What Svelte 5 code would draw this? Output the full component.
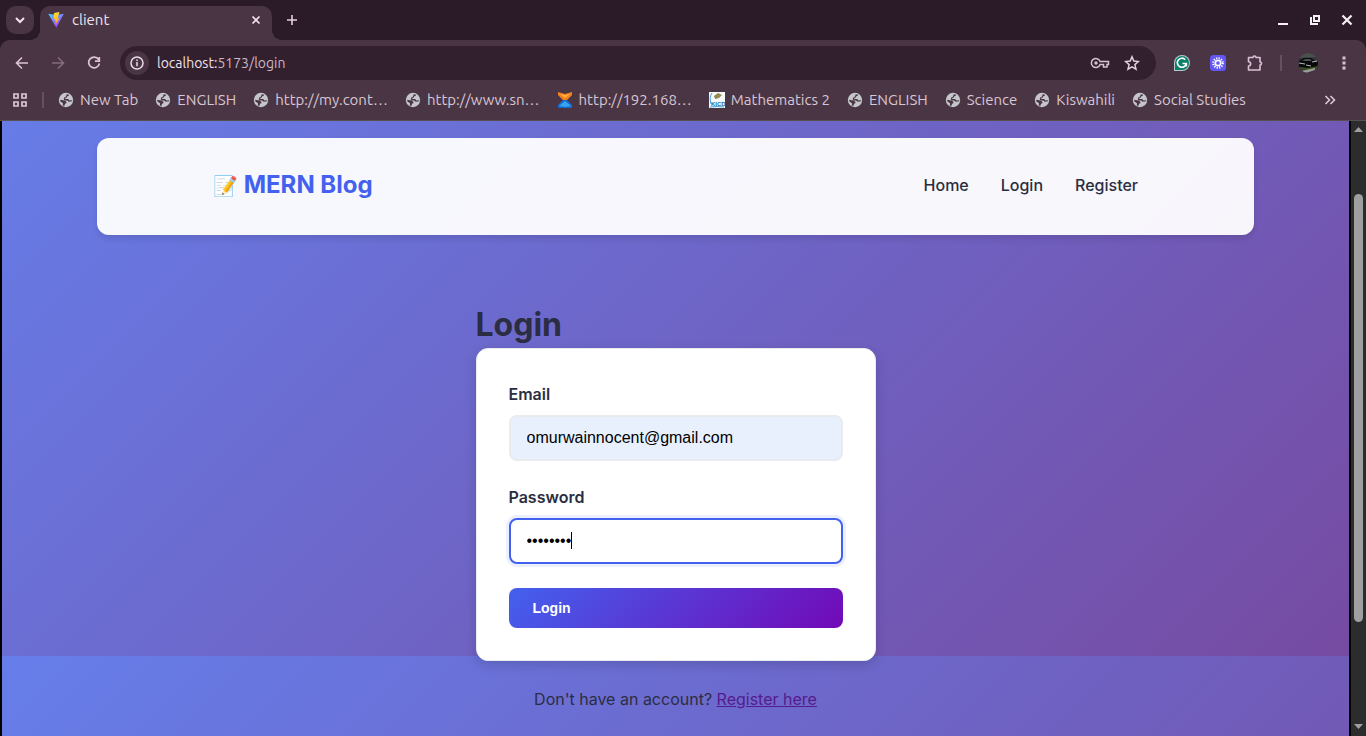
<script>
  const bookmarks = [
    { title: 'New Tab', icon: 'globe' },
    { title: 'ENGLISH', icon: 'globe' },
    { title: 'http://my.cont…', icon: 'globe' },
    { title: 'http://www.sn…', icon: 'globe' },
    { title: 'http://192.168…', icon: 'hourglass' },
    { title: 'Mathematics 2', icon: 'kicd' },
    { title: 'ENGLISH', icon: 'globe' },
    { title: 'Science', icon: 'globe' },
    { title: 'Kiswahili', icon: 'globe' },
    { title: 'Social Studies', icon: 'globe' }
  ];
  const links = ['Home', 'Login', 'Register'];
  let email = $state('omurwainnocent@gmail.com');
  let password = $state('password');
</script>

<div class="browser">
  <header class="tabstrip">
    <button class="tab-search" aria-label="Search tabs">
      <svg width="12" height="12" viewBox="0 0 12 12"><path d="M2 4l4 4 4-4" fill="none" stroke="#f2e4ee" stroke-width="2" /></svg>
    </button>
    <div class="tab">
      <svg width="16" height="16" viewBox="0 0 16 16">
        <defs>
          <linearGradient id="v1" x1="0" y1="0" x2=".6" y2="1"><stop offset="0" stop-color="#41d1ff" /><stop offset="1" stop-color="#bd34fe" /></linearGradient>
          <linearGradient id="v2" x1="0" y1="0" x2="0" y2="1"><stop offset="0" stop-color="#ffdd35" /><stop offset="1" stop-color="#ffa800" /></linearGradient>
        </defs>
        <path d="M.2 1.800L8 3l7.800-1.200L8.300 15.700z" fill="url(#v1)" />
        <path d="M11.500 0L6 1.100 5.600 7.300l1.700-.3-.5 2.500 1.300-.4-.7 3.700 4-6.500-1.900.3z" fill="url(#v2)" />
      </svg>
      <span class="tab-title">client</span>
      <button class="bare" aria-label="Close tab">
        <svg width="16" height="16" viewBox="0 0 16 16"><path d="M4.500 4.500l7 7M11.500 4.500l-7 7" stroke="#f2e4ee" stroke-width="1.700" /></svg>
      </button>
    </div>
    <button class="bare new-tab" aria-label="New tab">
      <svg width="16" height="16" viewBox="0 0 16 16"><path d="M8 3v10M3 8h10" stroke="#e5cfe0" stroke-width="1.600" /></svg>
    </button>
    <div class="window-controls">
      <button class="bare" aria-label="Minimize"><svg width="16" height="16" viewBox="0 0 16 16"><path d="M3 12h10" stroke="#f4f0f3" stroke-width="2" /></svg></button>
      <button class="bare" aria-label="Restore"><svg width="16" height="16" viewBox="0 0 16 16"><path d="M7 4h5v5H7zM4 5v7h7" fill="none" stroke="#f4f0f3" stroke-width="2" /></svg></button>
      <button class="bare" aria-label="Close"><svg width="16" height="16" viewBox="0 0 16 16"><path d="M3.500 3.500l9 9M12.500 3.500l-9 9" stroke="#f4f0f3" stroke-width="2.200" /></svg></button>
    </div>
  </header>

  <div class="toolbar">
    <div class="history">
      <button class="bare" aria-label="Back"><svg width="16" height="16" viewBox="0 0 16 16"><path d="M14 8H3M8 2.500L2.500 8 8 13.500" fill="none" stroke="#dfc4d8" stroke-width="1.600" /></svg></button>
      <button class="bare" aria-label="Forward"><svg width="16" height="16" viewBox="0 0 16 16"><path d="M2 8h11M8 2.500L13.500 8 8 13.500" fill="none" stroke="#856c7d" stroke-width="1.600" /></svg></button>
      <button class="bare" aria-label="Reload"><svg width="16" height="16" viewBox="0 0 16 16"><path d="M12.600 4.500A5.400 5.400 0 1 0 13.400 8.500M13.300 2v4.200H9" fill="none" stroke="#dfc4d8" stroke-width="1.700" /></svg></button>
    </div>
    <div class="omnibox">
      <button class="info" aria-label="View site information">
        <svg width="14" height="14" viewBox="0 0 14 14"><circle cx="7" cy="7" r="6" fill="none" stroke="#eadde6" stroke-width="1.500" /><path d="M7 6v4.200M7 3.500v1.500" stroke="#eadde6" stroke-width="1.500" /></svg>
      </button>
      <span class="url"><b>localhost:</b>5173/login</span>
      <button class="bare" aria-label="Passwords">
        <svg width="20" height="16" viewBox="0 0 20 16"><path d="M10.100 6.500A4.500 4.500 0 1 0 10.100 9.500H13.500V12h3.500V9.500h1.500v-3z" fill="none" stroke="#d8c2d1" stroke-width="1.500" /><circle cx="6" cy="8" r="1.700" fill="#d8c2d1" /></svg>
      </button>
      <button class="bare" aria-label="Bookmark this tab">
        <svg width="16" height="16" viewBox="0 0 16 16"><path d="M8 1.800l1.800 4.300 4.600.4-3.500 3.100 1.100 4.600L8 11.800l-4 2.400 1.100-4.600L1.600 6.500l4.600-.4z" fill="none" stroke="#e5d0df" stroke-width="1.500" /></svg>
      </button>
    </div>
    <div class="side">
      <div class="extensions">
        <button class="bare" aria-label="Grammarly">
          <svg width="16" height="16" viewBox="0 0 16 16"><path d="M0 16V8a8 8 0 1 1 8 8z" fill="#b8c9c5" /><path d="M1 15V8a7 7 0 1 1 7 7z" fill="#087f6b" /><path d="M11.200 4.700A4.500 4.500 0 1 0 12.300 8.500H8.500M12.300 8.500v3" fill="none" stroke="#fff" stroke-width="1.700" /></svg>
        </button>
        <button class="bare" aria-label="Assistant">
          <svg width="16" height="16" viewBox="0 0 16 16"><rect width="16" height="16" rx="3.500" fill="#6357f4" /><circle cx="8" cy="8" r="2.600" fill="none" stroke="#fff" stroke-width="1.500" /><circle cx="8" cy="8" r="4.600" fill="none" stroke="#fff" stroke-width="2.400" stroke-dasharray="1.200 1.209" /></svg>
        </button>
        <button class="bare" aria-label="Extensions">
          <svg width="18" height="18" viewBox="0 0 18 18"><path d="M2.500 3.500H7a1.500 1.500 0 0 1 3 0h4V8a1.500 1.500 0 0 1 0 3v5H2.500v-4a2 2 0 0 0 0-4.300z" fill="none" stroke="#dcc1d5" stroke-width="1.600" stroke-linejoin="round" /></svg>
        </button>
      </div>
      <span class="rule"></span>
      <button class="bare" aria-label="Profile">
        <svg width="20" height="20" viewBox="0 0 20 20">
          <defs><clipPath id="round"><circle cx="10" cy="10" r="10" /></clipPath></defs>
          <g clip-path="url(#round)"><path d="M0 0h20v20H0z" fill="#343638" /><path d="M0 0h20v4l-20 1z" fill="#4b504d" /><path d="M1 8l5-3h7l4 3 3 1v5l-7 2-12-2z" fill="#08090b" /><path d="M7 6h5l2 2H4z" fill="#495154" /><path d="M1 10l6 1M14 9l5-1M8 12l5 1" stroke="#b5baba" /><path d="M0 14l10 1 10-2v2l-10 2-10-2z" fill="#3a551e" /><path d="M3 18l14-3v2L8 20z" fill="#9a9c9c" /></g>
        </svg>
      </button>
      <button class="bare" aria-label="Menu"><svg width="20" height="16" viewBox="-2 0 20 16"><path d="M6.500 1.500h3v3h-3zM6.500 6.500h3v3h-3zM6.500 11.500h3v3h-3z" fill="#dcc1d5" /></svg></button>
    </div>
  </div>

  <nav class="bookmarks" aria-label="Bookmarks">
    <button class="bare" aria-label="Apps">
      <svg width="16" height="16" viewBox="0 0 16 16"><path d="M2 2h4v4H2zM10 2h4v4h-4zM2 10h4v4H2zM10 10h4v4h-4z" fill="none" stroke="#dac9d4" stroke-width="1.700" /></svg>
    </button>
    <span class="rule"></span>
    <div class="marks">
      {#each bookmarks as mark}
        <a href="#bookmark">
          {#if mark.icon === 'globe'}
            <svg width="16" height="16" viewBox="0 0 16 16"><circle cx="8" cy="8" r="7.200" fill="#c5c6cb" /><path d="M8.800 2.200l2.400.5-.8 1.200-1.200.3-.4 1.300-1.600.5.2 1h2.800l1.200 1.500 2.800-.3v1l-3.600.5-1.400-1.300H6.600L5.700 7.200l.6-1.800 1.500-.6zM2.200 7.800l4.200.6 2 1.400v1.400l-1.400.6-.6 2.200-1.600-.6.200-2.200L2.400 9.600z" fill="#4a3545" /></svg>
          {:else if mark.icon === 'hourglass'}
            <svg width="16" height="16" viewBox="0 0 16 16"><path d="M1 0l7 2 7-2v3L10 8H6L1 3z" fill="#f58220" /><path d="M6 8h4l5 5v3H1v-3z" fill="#1769d2" /><path d="M2 14l6-5 6 5-6 1z" fill="#35a4ef" /><path d="M3 2l5 1 5-1-5 4z" fill="#ffad3b" /></svg>
          {:else}
            <svg width="16" height="16" viewBox="0 0 16 16"><path d="M0 0h16v16H0z" fill="#f7f8f8" /><path d="M3 1Q0 5 2 12" fill="none" stroke="#49a0d8" /><path d="M5 4l4-3 4 2-3 3-4 1z" fill="#938951" /><text x="2" y="14" font-family="Liberation Sans" font-weight="700" font-size="6" fill="#176eae">KICD</text><path d="M1 15Q8 14 15 15" fill="none" stroke="#47a3dc" /></svg>
          {/if}
          <span>{mark.title}</span>
        </a>
      {/each}
    </div>
    <button class="bare" aria-label="More bookmarks"><svg width="16" height="16" viewBox="0 0 16 16"><path d="M3.500 4l4 4-4 4M8.500 4l4 4-4 4" fill="none" stroke="#dac9d4" stroke-width="1.600" /></svg></button>
  </nav>

  <div class="viewport">
    <main class="page">
      <nav class="site-nav">
        <a class="brand" href="#home"><span class="emoji">📝</span> MERN Blog</a>
        <div class="links">
          {#each links as link}<a href="#{link.toLowerCase()}">{link}</a>{/each}
        </div>
      </nav>
      <section class="login">
        <h1>Login</h1>
        <form onsubmit={(e) => e.preventDefault()}>
          <div class="fields">
            <div class="field">
              <label for="email">Email</label>
              <input id="email" class="filled" type="email" bind:value={email} />
            </div>
            <div class="field">
              <label for="password">Password</label>
              <div class="entry">
                <input id="password" class="active" type="password" bind:value={password} />
                <span class="caret"></span>
              </div>
            </div>
          </div>
          <button class="submit" type="submit">Login</button>
        </form>
        <p>Don't have an account? <a href="#register">Register here</a></p>
      </section>
    </main>
    <div class="scrollbar" aria-hidden="true">
      <svg width="9" height="5" viewBox="0 0 9 5"><path d="M0 5L4.500 0 9 5z" fill="#9f9f9f" /></svg>
      <div class="track"><span class="thumb"></span></div>
      <svg width="9" height="5" viewBox="0 0 9 5"><path d="M0 0l4.500 5L9 0z" fill="#9f9f9f" /></svg>
    </div>
  </div>
</div>

<style>
  :global(body) { margin: 0; background: #000; }
  * { box-sizing: border-box; }
  svg { display: block; flex: none; }
  .browser { display: flex; flex-direction: column; height: 100vh; overflow: hidden; font: 15px/20px Ubuntu, "Noto Sans", sans-serif; color: #d8c6d2; background: #2b1b28; }
  .bare { display: flex; padding: 0; border: 0; background: none; }
  .tabstrip { display: flex; align-items: center; height: 40px; flex: none; padding-left: 6px; }
  .tab-search { display: grid; place-items: center; width: 28px; height: 28px; padding: 0; border: 0; border-radius: 10px; background: #4a3545; }
  .tab { position: relative; display: flex; align-items: center; align-self: flex-end; gap: 8px; width: 232px; height: 34px; margin-left: 6px; padding: 0 8px 6px; border-radius: 10px 10px 0 0; background: #4a3545; color: #f0e2ec; }
  .tab::before, .tab::after { content: ""; position: absolute; bottom: 0; width: 10px; height: 10px; }
  .tab::before { right: 100%; background: radial-gradient(circle at 0 0, transparent 10px, #4a3545 10px); }
  .tab::after { left: 100%; background: radial-gradient(circle at 100% 0, transparent 10px, #4a3545 10px); }
  .tab-title { flex: 1; }
  .new-tab { margin-left: 12px; }
  .window-controls { display: flex; gap: 16px; margin-left: auto; padding-right: 11px; }
  .toolbar { display: flex; align-items: center; flex: none; height: 40px; padding: 6px 12px 0 14px; background: #4a3545; border-radius: 10px 10px 0 0; }
  .history { display: flex; gap: 20px; margin-right: 18px; }
  .omnibox { display: flex; flex: 1; align-items: center; gap: 14px; height: 34px; padding: 0 16px 0 5px; border-radius: 17px; background: #33202e; }
  .info { display: grid; place-items: center; width: 24px; height: 24px; margin-right: -6px; padding: 0; border: 0; border-radius: 12px; background: #4a3545; }
  .url { flex: 1; font-size: 14px; color: #cbb7c4; }
  .url b { font-weight: 400; color: #f0e2ec; }
  .side { display: flex; align-items: center; gap: 16px; padding-left: 18px; }
  .extensions { display: flex; align-items: center; gap: 20px; }
  .rule { width: 2px; height: 16px; background: #66515f; }
  .bookmarks { display: flex; align-items: center; flex: none; height: 41px; padding: 0 28px 0 12px; background: #4a3545; border-bottom: 1px solid #57504f; }
  .bookmarks .rule { margin: 0 14px; }
  .marks { display: flex; flex: 1; gap: 17px; overflow: hidden; }
  .marks a { display: flex; align-items: center; gap: 6px; color: inherit; text-decoration: none; white-space: nowrap; }
  .viewport { display: flex; flex: 1; min-height: 0; background: #000; padding-left: 2px; gap: 2px; }
  .page { flex: 1; overflow: hidden; font: 16px/26px Inter, sans-serif; color: #2b2d42; background: linear-gradient(135deg, #667eea 0%, #764ba2 100%) 0 -80px / 100% 100%; }
  .site-nav { display: flex; align-items: center; justify-content: space-between; width: calc(100% - 190px); height: 97px; margin: 17px auto 67px; padding: 0 116px 3px; border-radius: 12px; background: rgba(255, 255, 255, .95); box-shadow: 0 4px 6px rgba(0, 0, 0, .1); }
  .site-nav a { color: #2b2d42; text-decoration: none; font-weight: 500; }
  .site-nav .brand { color: #4361ee; font-size: 24px; font-weight: 700; }
  .emoji { font-size: 20px; }
  .links { display: flex; gap: 32px; }
  .login { width: 100%; max-width: 400px; margin: 0 auto; }
  h1 { margin: 0; font-size: 32px; line-height: 46px; }
  form { display: grid; gap: 24px; padding: 32px; border: 1px solid #e9ecef; border-radius: 12px; background: #fff; box-shadow: 0 4px 12px rgba(0, 0, 0, .15); }
  .fields { display: grid; gap: 23px; }
  .field { display: grid; gap: 8px; }
  label { font-weight: 600; }
  input { width: 100%; height: 46px; padding: 0 16px; border: 2px solid #e9ecef; border-radius: 8px; outline: none; background: #fff; color: #000; font: 16px "Liberation Sans", sans-serif; }
  .filled { background: #e8f0fe; }
  .active { border-color: #4361ee; box-shadow: 0 0 0 3px rgba(67, 97, 238, .1); }
  .entry { position: relative; display: grid; }
  .caret { position: absolute; left: 62px; top: 14px; width: 1px; height: 17px; background: #000; }
  .submit { height: 40px; padding: 0 24px; border: 0; border-radius: 8px; background: linear-gradient(135deg, #4361ee, #7209b7); color: #fff; font: 700 14px "Liberation Sans", sans-serif; text-align: left; }
  p { margin: 25px 0 0; text-align: center; }
  p a { color: #551a8b; }
  .scrollbar { display: flex; flex-direction: column; align-items: center; width: 15px; padding: 6px 0 7px; background: #2c2c2c; }
  .track { flex: 1; width: 9px; padding: 62px 0 102px; display: flex; }
  .thumb { width: 9px; border-radius: 5px; background: #9f9f9f; }
</style>
